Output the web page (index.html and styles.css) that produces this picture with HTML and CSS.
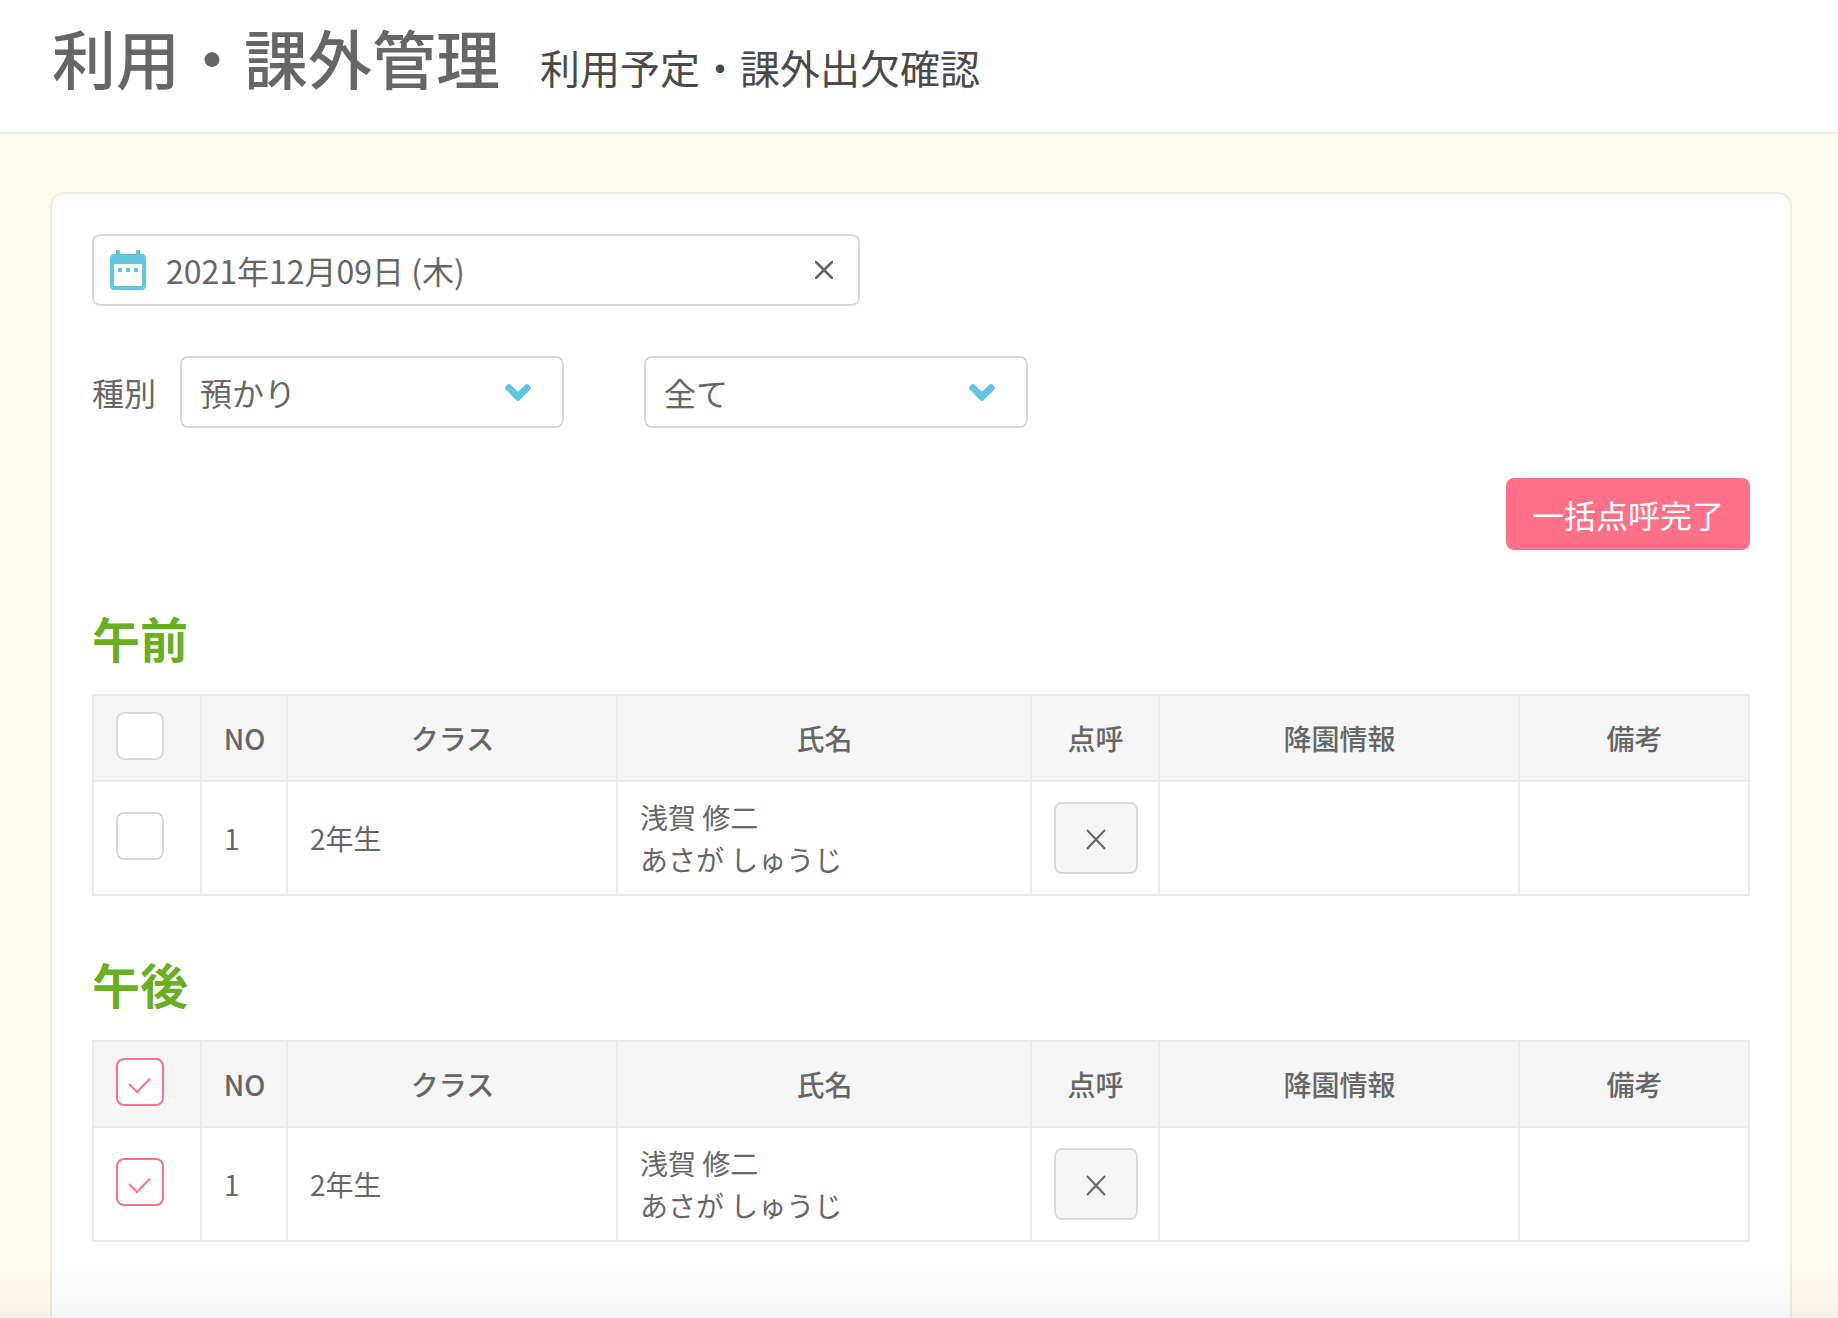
FILE: index.html
```html
<!DOCTYPE html>
<html lang="ja">
<head>
<meta charset="utf-8">
<meta name="viewport" content="width=device-width, initial-scale=1">
<title>利用・課外管理</title>
<link rel="stylesheet" href="styles.css">
</head>
<body>
<header class="page-header">
  <h1 class="page-title">利用・課外管理</h1>
  <p class="page-subtitle">利用予定・課外出欠確認</p>
</header>

<main class="page-main">
  <div class="card">
    <div class="date-field">
      <svg class="date-icon" viewBox="0 0 24 24" aria-hidden="true"><path d="M9 11H7v2h2v-2zm4 0h-2v2h2v-2zm4 0h-2v2h2v-2zm2-7h-1V2h-2v2H8V2H6v2H5c-1.11 0-1.99.9-1.99 2L3 20c0 1.1.89 2 2 2h14c1.1 0 2-.9 2-2V6c0-1.1-.9-2-2-2zm0 16H5V9h14v11z"/></svg>
      <input class="date-input" type="text" aria-label="日付" value="2021年12月09日 (木)">
      <button class="clear-button" type="button" aria-label="クリア">
        <svg class="clear-icon" viewBox="0 0 18 18" aria-hidden="true"><path d="M1 1l16 16M17 1L1 17"/></svg>
      </button>
    </div>

    <div class="filters">
      <label class="filter-label" for="kind">種別</label>
      <div class="select-box">
        <select class="select" id="kind"><option>預かり</option></select>
        <svg class="chevron" viewBox="0 0 26 17" aria-hidden="true"><path d="M2 4L4 2l9 8.500 9-8.500L24 4 13 15z"/></svg>
      </div>
      <div class="select-box select-box-target">
        <select class="select" aria-label="対象"><option>全て</option></select>
        <svg class="chevron" viewBox="0 0 26 17" aria-hidden="true"><path d="M2 4L4 2l9 8.500 9-8.500L24 4 13 15z"/></svg>
      </div>
    </div>

    <div class="actions">
      <button class="primary-button" type="button">一括点呼完了</button>
    </div>

    <section>
      <h2 class="section-title">午前</h2>
      <table class="roster">
        <colgroup><col class="col-check"><col class="col-no"><col class="col-class"><col class="col-name"><col class="col-call"><col class="col-leave"><col class="col-note"></colgroup>
        <thead>
          <tr>
            <th class="check-cell"><input class="check" type="checkbox" aria-label="午前を全て選択"></th>
            <th>NO</th><th>クラス</th><th>氏名</th><th>点呼</th><th>降園情報</th><th>備考</th>
          </tr>
        </thead>
        <tbody>
          <tr>
            <td class="check-cell"><input class="check" type="checkbox" aria-label="浅賀 修二を選択"></td>
            <td>1</td>
            <td>2年生</td>
            <td>浅賀 修二<br>あさが しゅうじ</td>
            <td><button class="call-button" type="button" aria-label="点呼"><svg class="call-icon" viewBox="0 0 20 24" aria-hidden="true"><path d="M1 4l18 19M19 4L1 23"/></svg></button></td>
            <td></td>
            <td></td>
          </tr>
        </tbody>
      </table>
    </section>

    <section>
      <h2 class="section-title">午後</h2>
      <table class="roster">
        <colgroup><col class="col-check"><col class="col-no"><col class="col-class"><col class="col-name"><col class="col-call"><col class="col-leave"><col class="col-note"></colgroup>
        <thead>
          <tr>
            <th class="check-cell"><input class="check" type="checkbox" checked aria-label="午後を全て選択"></th>
            <th>NO</th><th>クラス</th><th>氏名</th><th>点呼</th><th>降園情報</th><th>備考</th>
          </tr>
        </thead>
        <tbody>
          <tr>
            <td class="check-cell"><input class="check" type="checkbox" checked aria-label="浅賀 修二を選択"></td>
            <td>1</td>
            <td>2年生</td>
            <td>浅賀 修二<br>あさが しゅうじ</td>
            <td><button class="call-button" type="button" aria-label="点呼"><svg class="call-icon" viewBox="0 0 20 24" aria-hidden="true"><path d="M1 4l18 19M19 4L1 23"/></svg></button></td>
            <td></td>
            <td></td>
          </tr>
        </tbody>
      </table>
    </section>
  </div>
</main>
<div class="bottom-shade" aria-hidden="true"></div>
</body>
</html>
```
FILE: styles.css
```css
*,
*::before,
*::after {
  box-sizing: border-box;
}

body {
  display: flex;
  flex-direction: column;
  min-height: 100vh;
  margin: 0;
  background: #fffbee;
  color: #666;
  font-family: "Noto Sans CJK JP", "Noto Sans", sans-serif;
  font-size: 32px;
}

button,
input,
select {
  font: inherit;
  color: inherit;
}

/* Header */
.page-header {
  display: flex;
  align-items: baseline;
  gap: 40px;
  padding: 20px 52px 40px;
  border-bottom: 2px solid #ebebeb;
  background: #fff;
}

.page-title {
  margin: 0;
  font-size: 64px;
  font-weight: 500;
  line-height: 72px;
}

.page-subtitle {
  margin: 0;
  color: #4a4a4a;
  font-size: 40px;
  line-height: 48px;
}

/* Card */
.page-main {
  display: flex;
  flex: 1;
  flex-direction: column;
  padding: 58px 46px 0 50px;
}

.card {
  flex: 1;
  padding: 40px 40px 60px;
  border: 2px solid rgba(0, 0, 0, 0.06);
  border-bottom: 0;
  border-radius: 14px 14px 0 0;
  background: #fff;
  background-clip: padding-box;
}

/* Date and filters */
.date-field {
  display: flex;
  align-items: center;
  gap: 14px;
  width: 100%;
  max-width: 768px;
  height: 72px;
  padding: 0 16px 0 10px;
  border: 2px solid #d9d9d9;
  border-radius: 8px;
  background: #fff;
}

.date-icon {
  flex: none;
  width: 48px;
  height: 48px;
  fill: #63c6df;
}

.date-input {
  flex: 1;
  min-width: 0;
  height: 48px;
  padding: 0;
  border: 0;
  outline: 0;
  background: none;
}

.clear-button {
  display: grid;
  place-items: center;
  width: 36px;
  height: 36px;
  padding: 0;
  border: 0;
  background: none;
}

.clear-icon,
.call-icon {
  fill: none;
  stroke: #666;
  stroke-width: 2;
}

.clear-icon {
  width: 18px;
  height: 18px;
  stroke-width: 2.5;
  stroke-linecap: round;
}

.filters {
  display: flex;
  align-items: center;
  margin-top: 50px;
}

.filter-label {
  margin-right: 24px;
}

.select-box {
  display: grid;
  align-items: center;
  width: 384px;
}

.select-box-target {
  margin-left: 80px;
}

.select {
  grid-area: 1 / 1;
  width: 100%;
  height: 72px;
  padding: 0 72px 0 18px;
  border: 2px solid #d9d9d9;
  border-radius: 8px;
  background: #fff;
  appearance: none;
}

.chevron {
  grid-area: 1 / 1;
  justify-self: end;
  width: 26px;
  height: 17px;
  margin-right: 33px;
  fill: #63c6df;
  stroke: #63c6df;
  stroke-width: 4;
  stroke-linejoin: round;
  pointer-events: none;
}

.actions {
  display: flex;
  justify-content: flex-end;
  margin-top: 50px;
}

.primary-button {
  height: 72px;
  padding: 0 26px;
  border: 0;
  border-radius: 8px;
  background: #ff7189;
  color: #fff;
}

/* Rosters */
.section-title {
  margin: 51px 0 21px;
  color: #6aaf22;
  font-size: 48px;
  font-weight: 700;
  line-height: 72px;
}

.roster {
  width: 100%;
  border-collapse: collapse;
  table-layout: fixed;
  font-size: 28px;
  line-height: 42px;
}

.roster th,
.roster td {
  padding: 14px 20px 14px 22px;
  border: 2px solid #ebebeb;
  text-align: left;
  vertical-align: middle;
}

.roster th {
  padding-left: 21px;
  background: #f5f5f5;
  font-weight: 500;
  text-align: center;
}

.roster .check-cell {
  padding: 16px 22px 20px;
  text-align: left;
}

.col-check { width: 108px; }
.col-no { width: 86px; }
.col-class { width: 330px; }
.col-name { width: 414px; }
.col-call { width: 128px; }
.col-leave { width: 360px; }
.col-note { width: 230px; }

.check {
  display: block;
  width: 48px;
  height: 48px;
  margin: 0;
  border: 2px solid #d9d9d9;
  border-radius: 8px;
  background: #fff;
  appearance: none;
}

.check:checked {
  border-color: #ff7189;
  background: #fff url("data:image/svg+xml,%3Csvg xmlns='http://www.w3.org/2000/svg' viewBox='0 0 44 44'%3E%3Cpath d='M11 24l8 8 13-13.500' fill='none' stroke='%23ff7189' stroke-width='2'/%3E%3C/svg%3E") center / 44px 44px no-repeat;
}

.call-button {
  display: grid;
  place-items: center;
  width: 84px;
  height: 72px;
  margin: 0;
  padding: 0;
  border: 2px solid #d9d9d9;
  border-radius: 8px;
  background: #f5f5f5;
}

.call-icon {
  width: 20px;
  height: 24px;
}

/* Soft shade along the bottom of the window */
.bottom-shade {
  position: fixed;
  right: 0;
  bottom: 0;
  left: 0;
  height: 64px;
  background: linear-gradient(to bottom, rgba(0, 0, 0, 0), rgba(0, 0, 0, 0.015) 50%, rgba(0, 0, 0, 0.04));
  pointer-events: none;
}
```
